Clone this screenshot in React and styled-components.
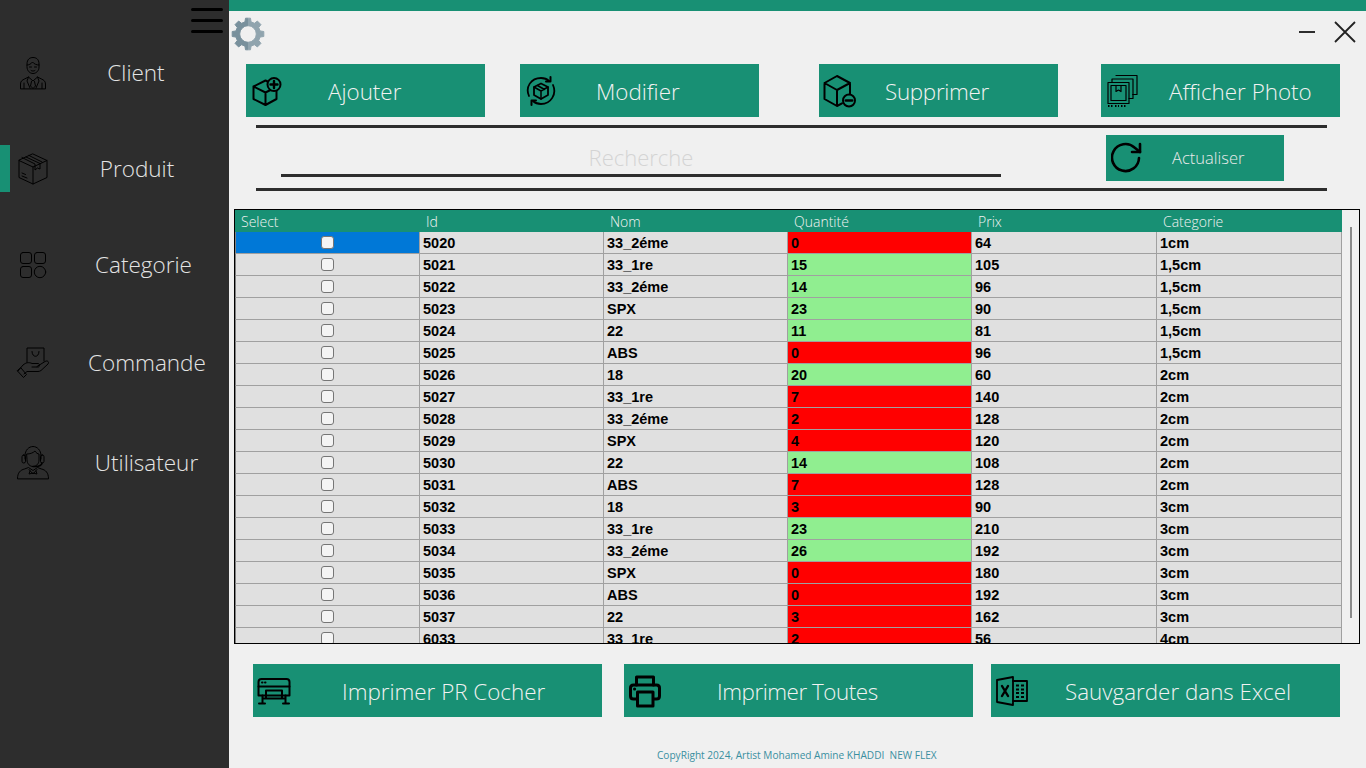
import React from "react";
import styled, { createGlobalStyle } from "styled-components";

const GREEN = "#189074";
const DARK = "#2d2d2d";

const rows = [
  [5020, "33_2éme", 0, 64, "1cm"],
  [5021, "33_1re", 15, 105, "1,5cm"],
  [5022, "33_2éme", 14, 96, "1,5cm"],
  [5023, "SPX", 23, 90, "1,5cm"],
  [5024, "22", 11, 81, "1,5cm"],
  [5025, "ABS", 0, 96, "1,5cm"],
  [5026, "18", 20, 60, "2cm"],
  [5027, "33_1re", 7, 140, "2cm"],
  [5028, "33_2éme", 2, 128, "2cm"],
  [5029, "SPX", 4, 120, "2cm"],
  [5030, "22", 14, 108, "2cm"],
  [5031, "ABS", 7, 128, "2cm"],
  [5032, "18", 3, 90, "3cm"],
  [5033, "33_1re", 23, 210, "3cm"],
  [5034, "33_2éme", 26, 192, "3cm"],
  [5035, "SPX", 0, 180, "3cm"],
  [5036, "ABS", 0, 192, "3cm"],
  [5037, "22", 3, 162, "3cm"],
  [6033, "33_1re", 2, 56, "4cm"],
];

const columns = [
  ["Select", 185],
  ["Id", 184],
  ["Nom", 184],
  ["Quantité", 184],
  ["Prix", 185],
  ["Categorie", 185],
];

const Svg = ({ w, h, sw = 1, children }) => (
  <svg width={w} height={h} viewBox={`0 0 ${w} ${h}`} fill="none" stroke="#000" strokeWidth={sw} strokeLinecap="round" strokeLinejoin="round">
    {children}
  </svg>
);

const ClientIcon = () => (
  <Svg w={28} h={34}>
    <path d="M8 8C8 3 11 1.500 14 1.500S20 3 20 8v3c0 4-3 6.500-6 6.500S8 15 8 11Z" />
    <path d="M8 9c2 0 4-1 5.500-3 1.500 2 4 3 6.500 3" />
    <path d="M10.500 11h2M15.500 11h2M12 14.500c1 .8 3 .8 4 0" />
    <path d="M1.500 32.500V28c0-3 2-4 4-5l4-2 4.500 4 4.500-4 4 2c2 1 4 2 4 5v4.500Z" />
    <path d="M12.500 25.500 11.500 30l2.500 2.500 2.500-2.500-1-4.500M9.500 21 8 25l3 7M18.500 21l1.500 4-3 7M5 27v5.500M23 27v5.500" />
  </Svg>
);

const BoxIcon = () => (
  <Svg w={32} h={34}>
    <path d="M16 2 30 8.500v17L16 32 2 25.500v-17Z" />
    <path d="M2 8.500 16 15l14-6.500M16 15v17" />
    <path d="M9 5 23 11.500v5.500l-2.500-1-2.500 2v-6L5 5.500M12 3.500l13 6.500" />
    <path d="M5 21l3.500 1.500M5 24l5 2" />
  </Svg>
);

const CategoryIcon = () => (
  <Svg w={28} h={28}>
    <rect x="1.500" y="1.500" width="11" height="11" rx="2.500" />
    <rect x="15.500" y="1.500" width="11" height="11" rx="2.500" />
    <rect x="1.500" y="15.500" width="11" height="11" rx="2.500" />
    <circle cx="21" cy="21" r="5.700" />
  </Svg>
);

const OrderIcon = () => (
  <Svg w={34} h={32}>
    <path d="M11 15.500V1h17v13" />
    <path d="M16 4.500c0 6.500 7 6.500 7 0" />
    <path d="M2 24l5-6c3-2.500 6-3 9-1.500h6c2 0 2 3.500 0 3.500h-6" />
    <path d="M21 19.500l8-5c2.500-1.500 4.500.5 3 2.500l-7 6.500c-1 .7-2 1-3 1H11l-3 2.500" />
    <path d="M1.500 24 7.500 30.500 10.500 27.500 5 21Z" />
  </Svg>
);

const UserIcon = () => (
  <Svg w={34} h={35}>
    <path d="M9 14V11C9 5 13 1.500 17 1.500S25 5 25 11v3" />
    <rect x="6" y="10" width="3.500" height="8" rx="1.700" />
    <rect x="24.500" y="10" width="3.500" height="8" rx="1.700" />
    <path d="M11 9c3 0 6-1 8-3 1 2 3 3 4 3v6c0 4-3 6.500-6 6.500S11 19 11 15Z" />
    <path d="M26 18c0 2-3 3.500-6 3.500h-3" strokeWidth="1.600" />
    <path d="M1.500 33.500c0-6 3-8.500 7-9.500l4-1.500 4.500 3 4.500-3 4 1.500c4 1 7 3.500 7 9.500Z" />
    <path d="M13 24.500 17 29l4-4.500M14 26l-1 3 4-1 4 1-1-3" />
  </Svg>
);

const AddIcon = () => (
  <Svg w={30} h={30} sw={2}>
    <path d="M1.500 10.500 13.500 4.500 19 7M1.500 10.500V23l12 6 11-6V13M1.500 10.500l12 6 11-5.500M13.500 16.500V29" />
    <circle cx="22" cy="8.500" r="6.500" fill={GREEN} />
    <path d="M22 5v7M18.500 8.500h7" strokeWidth="2.400" />
  </Svg>
);

const ModifyIcon = () => (
  <Svg w={30} h={30} sw={1.800}>
    <path d="M15 7.500 22 11v8l-7 4-7-4v-8Z" />
    <path d="M8 11l7 4 7-4M15 15v8M11.500 9.500l7 4" strokeWidth="1.500" />
    <path d="M3 20C-1 11 5 2 15 2c3 0 6 1 8 3" />
    <path d="M27 9c4 9-2 19-12 19-3 0-6-1-8-3" />
    <path d="M24.500 1v4.500H20M5.500 29v-4.500H10" strokeWidth="2" />
  </Svg>
);

const RemoveIcon = () => (
  <Svg w={34} h={34} sw={2}>
    <path d="M14 2 27 9v11M14 2 1.500 9v16L14 32l5-2.700M1.500 9 14 16 27 9M14 16v16" />
    <circle cx="26" cy="26.500" r="6" fill={GREEN} />
    <path d="M22.800 26.500h6.400" strokeWidth="2.400" />
  </Svg>
);

const PhotoIcon = () => (
  <Svg w={32} h={33} sw={1.200}>
    <path d="M9 1h21v19h-4.500M5 7V4.500h21V24h-4" />
    <rect x="1" y="8" width="21" height="21" />
    <rect x="4" y="11" width="15" height="15" />
    <path d="M9 11v6l2.500-1.500L14 17v-6" />
    <path d="M1 31.500h5M8 31.500h4M14 31.500h6" strokeWidth="2" strokeDasharray="1.500 1.500" strokeLinecap="butt" />
  </Svg>
);

const RefreshIcon = () => (
  <Svg w={32} h={32} sw={2.600}>
    <path d="M28 16A13.500 13.500 0 1 1 23.500 5.500L29 10" />
    <path d="M29 2v8h-8" />
  </Svg>
);

const PlotterIcon = () => (
  <Svg w={34} h={28} sw={2}>
    <path d="M1.500 18.500V5c0-2 1-3 3-3h25c2 0 3 1 3 3v13.500Z" />
    <path d="M1.500 9.500h31M5.500 18.500v8M28.500 18.500v8M2 26.500h6M26 26.500h6M9 13.500h16v8H9ZM5.500 21.500H9M25 21.500h3.500" />
    <path d="M5 5.500h.5M8 5.500h.5" />
  </Svg>
);

const PrinterIcon = () => (
  <Svg w={34} h={34} sw={3}>
    <path d="M8.500 11V3h17v8" />
    <path d="M8 25H5.500c-2 0-3-1-3-3v-8c0-2 1-3 3-3h23c2 0 3 1 3 3v8c0 2-1 3-3 3H26" />
    <rect x="9.500" y="18" width="15.500" height="14" />
    <path d="M6.500 15h.1" />
  </Svg>
);

const ExcelIcon = () => (
  <Svg w={34} h={32} sw={1.800}>
    <path d="M18 2 2 5v22l16 3Z" />
    <path d="M18 6h14v20H18" />
    <path d="M7 11l6 10M13 11 7 21" strokeWidth="2.400" />
    <path d="M21 10.500h3M26 10.500h3M21 14.500h3M26 14.500h3M21 18h3M26 18h3M21 22h3M26 22h3" strokeLinecap="butt" />
  </Svg>
);

// eight teeth round the centre, hole cut with evenodd
const gearPath = () => {
  const pt = (deg, r) => {
    const a = ((deg - 90) * Math.PI) / 180;
    return `${(17 + r * Math.cos(a)).toFixed(2)} ${(17 + r * Math.sin(a)).toFixed(2)}`;
  };
  const parts = [];
  for (let i = 0; i < 8; i++) {
    const c = i * 45;
    parts.push(pt(c - 14, 12.5), pt(c - 9, 16), pt(c + 9, 16), pt(c + 14, 12.5));
  }
  return `M${parts.join("L")}ZM25.300 17a8.300 8.300 0 1 0-16.600 0a8.300 8.300 0 1 0 16.600 0Z`;
};

const GearIcon = () => (
  <svg width="34" height="34" viewBox="0 0 34 34">
    <defs>
      <linearGradient id="gearFill" x1="0" x2="1" y1="0" y2="0">
        <stop offset="0.5" stopColor="#78909c" />
        <stop offset="0.5" stopColor="#90a4ae" />
      </linearGradient>
    </defs>
    <path fill="url(#gearFill)" fillRule="evenodd" d={gearPath()} stroke="url(#gearFill)" strokeLinejoin="round" />
  </svg>
);

const GlobalStyle = createGlobalStyle`
  html, body {
    margin: 0;
    padding: 0;
    overflow: hidden;
    background: #f0f0f0;
  }
  * {
    box-sizing: border-box;
  }
`;

const Shell = styled.div`
  display: flex;
  width: 1366px;
  height: 768px;
  font-family: "Open Sans", "Liberation Sans", sans-serif;
  font-weight: 300;
`;

const Sidebar = styled.aside`
  width: 229px;
  flex: none;
  background: ${DARK};
  position: relative;
  padding-top: 49px;
`;

const Burger = styled.div`
  position: absolute;
  top: 8px;
  left: 191px;
  width: 32px;
  display: flex;
  flex-direction: column;
  gap: 8px;
  span {
    display: block;
    height: 3px;
    background: #000;
    border-radius: 2px;
  }
`;

const NavItem = styled.div`
  height: 47px;
  margin-top: ${(p) => p.$top}px;
  display: flex;
  align-items: center;
  color: #e4e4e4;
  font-size: 22.500px;
  ${(p) => p.$active && `box-shadow: inset 10px 0 0 ${GREEN};`}
`;

const NavIcon = styled.div`
  width: 66px;
  flex: none;
  display: flex;
  justify-content: center;
  line-height: 0;
`;

const NavLabel = styled.div`
  width: 135px;
  text-align: center;
  padding-left: ${(p) => p.$shift}px;
  line-height: 47px;
  white-space: nowrap;
`;

const Main = styled.main`
  flex: 1;
  display: flex;
  flex-direction: column;
  min-width: 0;
`;

const TopStrip = styled.div`
  height: 11px;
  background: ${GREEN};
`;

const Header = styled.div`
  height: 53px;
  display: flex;
  justify-content: space-between;
  padding: 6px 9px 0 2px;
`;

const WindowControls = styled.div`
  display: flex;
  align-items: center;
  height: 30px;
  gap: 18px;
`;

const MinimizeMark = styled.div`
  width: 16px;
  height: 2px;
  background: ${DARK};
`;

const ActionRow = styled.div`
  display: flex;
  height: 53px;
  padding-left: ${(p) => p.$left}px;
  margin-top: ${(p) => p.$top || 0}px;
`;

const ActionButton = styled.div`
  width: ${(p) => p.$width}px;
  height: 100%;
  flex: none;
  margin-left: ${(p) => p.$gap || 0}px;
  background: ${GREEN};
  color: #f2f2f2;
  font-size: 22.400px;
  letter-spacing: ${(p) => p.$track || 0}px;
  display: flex;
  align-items: center;
  position: relative;
  padding: 2px 0 0 ${(p) => p.$text}px;
  white-space: nowrap;
`;

const ButtonIcon = styled.div`
  position: absolute;
  left: ${(p) => p.$left}px;
  top: 50%;
  transform: translateY(-50%);
  line-height: 0;
`;

const Separator = styled.div`
  width: 1071px;
  height: 3px;
  margin: ${(p) => p.$top}px 0 0 27px;
  background: ${DARK};
`;

const SearchRow = styled.div`
  display: flex;
  height: 60px;
  padding-left: 52px;
`;

const SearchInput = styled.input`
  width: 720px;
  height: 37px;
  margin-top: 12px;
  border: 0;
  border-bottom: 3px solid ${DARK};
  background: transparent;
  outline: none;
  text-align: center;
  font: 300 22px "Open Sans", "Liberation Sans", sans-serif;
  color: #333;
  &::placeholder {
    color: #d4d4d4;
    opacity: 1;
  }
`;

const RefreshButton = styled.div`
  width: 178px;
  height: 46px;
  margin: 7px 0 0 105px;
  background: ${GREEN};
  color: #eaeaea;
  font-size: 16.500px;
  display: flex;
  align-items: center;
  position: relative;
  padding: 0 0 2px 66px;
`;

const TableFrame = styled.div`
  width: 1126px;
  height: 435px;
  margin: 18px 0 0 5px;
  border: 1px solid #000;
  overflow: hidden;
  position: relative;
`;

const Grid = styled.table`
  width: 1107px;
  table-layout: fixed;
  border-collapse: separate;
  border-spacing: 0;
`;

const HeadCell = styled.th`
  height: 22px;
  padding: 0 0 0 6px;
  background: ${GREEN};
  color: #f2f2f2;
  font-size: 14px;
  font-weight: 300;
  text-align: left;
`;

const Cell = styled.td`
  height: 22px;
  padding: 2px 0 0 3px;
  background: ${(p) => p.$bg || "#e0e0e0"};
  border-right: 1px solid #a0a0a0;
  border-bottom: 1px solid #a0a0a0;
  font: bold 14.500px "Liberation Sans", Arial, sans-serif;
  color: #000;
  line-height: 19px;
  overflow: hidden;
  white-space: nowrap;
  &:first-child {
    text-align: center;
    padding: 0;
    border-left: 1px solid #808080;
  }
`;

const Check = styled.input`
  appearance: none;
  display: block;
  width: 13px;
  height: 13px;
  margin: 0 auto 1px;
  border: 1px solid #767676;
  border-radius: 3px;
  background: #f4f4f4;
`;

const ScrollThumb = styled.div`
  position: absolute;
  left: 1115px;
  top: 17px;
  width: 2px;
  height: 391px;
  background: #8a8a8a;
`;

const Footer = styled.div`
  margin-top: 31px;
  padding-left: 428px;
  font-size: 10.100px;
  font-weight: 400;
  color: #3a8fa0;
  white-space: pre;
`;

const topButtons = [
  { label: "Ajouter", icon: <AddIcon />, gap: 0, text: 82, left: 6 },
  { label: "Modifier", icon: <ModifyIcon />, gap: 35, text: 76, left: 6 },
  { label: "Supprimer", icon: <RemoveIcon />, gap: 60, text: 66, left: 4, track: -0.3 },
  { label: "Afficher Photo", icon: <PhotoIcon />, gap: 43, text: 68, left: 6 },
];

const bottomButtons = [
  { label: "Imprimer PR Cocher", icon: <PlotterIcon />, gap: 0, text: 89, left: 4 },
  { label: "Imprimer Toutes", icon: <PrinterIcon />, gap: 22, text: 93, left: 4, track: -0.45 },
  { label: "Sauvgarder dans Excel", icon: <ExcelIcon />, gap: 18, text: 74, left: 4 },
];

const navItems = [
  { label: "Client", icon: <ClientIcon />, top: 0, shift: 5 },
  { label: "Produit", icon: <BoxIcon />, top: 49, shift: 7, active: true },
  { label: "Categorie", icon: <CategoryIcon />, top: 49, shift: 20 },
  { label: "Commande", icon: <OrderIcon />, top: 51, shift: 22 },
  { label: "Utilisateur", icon: <UserIcon />, top: 53, shift: 26 },
];

export default function App() {
  return (
    <Shell>
      <GlobalStyle />
      <Sidebar>
        <Burger>
          <span />
          <span />
          <span />
        </Burger>
        {navItems.map((item) => (
          <NavItem key={item.label} $top={item.top} $active={item.active}>
            <NavIcon>{item.icon}</NavIcon>
            <NavLabel $shift={item.shift}>{item.label}</NavLabel>
          </NavItem>
        ))}
      </Sidebar>

      <Main>
        <TopStrip />
        <Header>
          <GearIcon />
          <WindowControls>
            <MinimizeMark />
            <svg width="24" height="24" viewBox="0 0 24 24" stroke="#222" strokeWidth="1.800">
              <path d="M2 2l20 20M22 2 2 22" />
            </svg>
          </WindowControls>
        </Header>

        <ActionRow $left={17}>
          {topButtons.map((b) => (
            <ActionButton key={b.label} $width={239} $gap={b.gap} $text={b.text} $track={b.track}>
              <ButtonIcon $left={b.left}>{b.icon}</ButtonIcon>
              {b.label}
            </ActionButton>
          ))}
        </ActionRow>

        <Separator $top={8} />
        <SearchRow>
          <SearchInput placeholder="Recherche" />
          <RefreshButton>
            <ButtonIcon $left={5}>
              <RefreshIcon />
            </ButtonIcon>
            Actualiser
          </RefreshButton>
        </SearchRow>
        <Separator $top={0} />

        <TableFrame>
          <Grid>
            <colgroup>
              {columns.map(([name, width]) => (
                <col key={name} style={{ width }} />
              ))}
            </colgroup>
            <thead>
              <tr>
                {columns.map(([name]) => (
                  <HeadCell key={name}>{name}</HeadCell>
                ))}
              </tr>
            </thead>
            <tbody>
              {rows.map(([id, nom, qty, prix, cat], i) => (
                <tr key={id}>
                  <Cell $bg={i === 0 ? "#0078d7" : undefined}>
                    <Check type="checkbox" readOnly />
                  </Cell>
                  <Cell>{id}</Cell>
                  <Cell>{nom}</Cell>
                  <Cell $bg={qty >= 10 ? "#90ee90" : "#ff0000"}>{qty}</Cell>
                  <Cell>{prix}</Cell>
                  <Cell>{cat}</Cell>
                </tr>
              ))}
            </tbody>
          </Grid>
          <ScrollThumb />
        </TableFrame>

        <ActionRow $left={24} $top={20}>
          {bottomButtons.map((b) => (
            <ActionButton key={b.label} $width={349} $gap={b.gap} $text={b.text} $track={b.track}>
              <ButtonIcon $left={b.left}>{b.icon}</ButtonIcon>
              {b.label}
            </ActionButton>
          ))}
        </ActionRow>

        <Footer>CopyRight 2024, Artist Mohamed Amine KHADDI  NEW FLEX</Footer>
      </Main>
    </Shell>
  );
}
